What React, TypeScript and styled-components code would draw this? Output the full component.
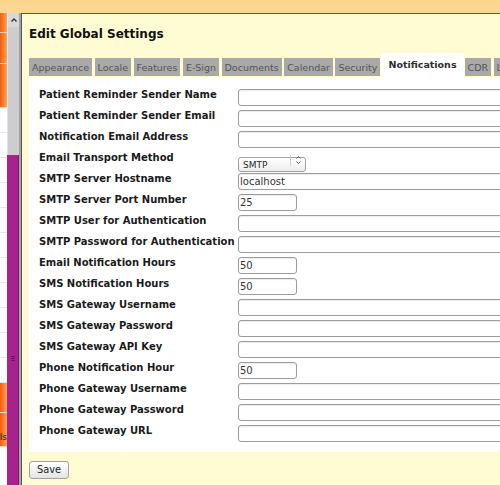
import React from "react";
import styled, { createGlobalStyle } from "styled-components";

const GlobalStyle = createGlobalStyle`
  html, body { margin: 0; padding: 0; }
  body {
    width: 500px;
    height: 485px;
    overflow: hidden;
    font-family: "DejaVu Sans", Verdana, sans-serif;
    background: #fffbd2;
  }
`;

const Page = styled.div`
  display: flex;
  flex-direction: column;
  width: 500px;
  height: 485px;
  overflow: hidden;
`;

const TopBar = styled.div`
  height: 13px;
  flex: none;
  background: linear-gradient(to bottom, #fcd58b, #fcd995);
`;

const Body = styled.div`
  flex: 1;
  display: flex;
  min-height: 0;
`;

const SideStrip = styled.div`
  width: 7px;
  flex: none;
  display: flex;
  flex-direction: column;
  overflow: hidden;
  background: #ffffff;
`;

const SideCell = styled.div<{ $h: number; $orange?: boolean }>`
  height: ${(p) => p.$h}px;
  flex: none;
  box-sizing: border-box;
  border-bottom: 1px solid ${(p) => (p.$orange ? "#fdd3b4" : "#e4e4ee")};
  background: ${(p) =>
    p.$orange ? "linear-gradient(to right, #f55d08, #fca35c)" : "#ffffff"};
  font-size: 9px;
  line-height: 10px;
  color: #222;
  display: flex;
  justify-content: flex-end;
  align-items: flex-end;
  padding-bottom: 4px;
  white-space: nowrap;
  overflow: hidden;
`;

const ScrollBar = styled.div`
  width: 12px;
  flex: none;
  display: flex;
  flex-direction: column;
  overflow: hidden;
  background: #cfcfcf;
`;

const ScrollButton = styled.div`
  height: 14px;
  flex: none;
  box-sizing: border-box;
  background: #d8d8d8;
  border-left: 1px solid #ececec;
  display: flex;
  align-items: center;
  justify-content: center;
`;

const ScrollTrack = styled.div`
  height: 128px;
  flex: none;
  background: #cdcdd0;
  border-left: 1px solid #e2e2e2;
`;

const ScrollThumb = styled.div`
  height: 406px;
  flex: none;
  box-sizing: border-box;
  background: #a6228d;
  border-right: 1px solid #7d1a6b;
  display: flex;
  flex-direction: column;
  align-items: center;
  justify-content: center;
  gap: 1px;
`;

const Grip = styled.div`
  width: 4px;
  height: 1px;
  background: #6c145b;
`;

const Gutter = styled.div`
  width: 2px;
  flex: none;
  background: #a2a2a2;
`;

const Main = styled.div`
  flex: 1;
  min-width: 0;
  border-top: 1px solid #555555;
  border-left: 1px solid #555555;
  background: #fffbd2;
  padding: 13px 0 0 7px;
  overflow: hidden;
`;

const Title = styled.h1`
  margin: 0;
  font-size: 12px;
  line-height: 15px;
  font-weight: bold;
  color: #111111;
  white-space: nowrap;
`;

const TabBar = styled.div`
  margin-top: 11px;
  height: 24px;
  display: flex;
  align-items: flex-end;
  gap: 2.5px;
  white-space: nowrap;
  overflow: hidden;
`;

const Tab = styled.div<{ $active?: boolean }>`
  flex: none;
  font-size: 9.5px;
  color: ${(p) => (p.$active ? "#2e2e2e" : "#555555")};
  font-weight: ${(p) => (p.$active ? "bold" : "normal")};
  background: ${(p) => (p.$active ? "#ffffff" : "#a9a9a9")};
  padding: ${(p) => (p.$active ? "3px 7px 3px" : "1px 3px 0")};
  line-height: ${(p) => (p.$active ? "18px" : "17px")};
  margin: ${(p) => (p.$active ? "0 -1.5px" : "0 0 1px")};
`;

const Panel = styled.div`
  background: #ffffff;
  padding: 10px 0 8px 10px;
  display: grid;
  grid-template-columns: 199px 1fr;
  grid-auto-rows: 21px;
  width: 600px;
`;

const Label = styled.div`
  font-size: 10px;
  line-height: 12px;
  padding-top: 1.5px;
  font-weight: bold;
  color: #1b1b1b;
  white-space: nowrap;
`;

const Field = styled.div`
  display: flex;
  align-items: flex-start;
  padding-top: 2px;
`;

const TextInput = styled.input<{ $small?: boolean }>`
  box-sizing: border-box;
  width: ${(p) => (p.$small ? "59px" : "300px")};
  height: 17px;
  margin: 0;
  padding: 0 1px;
  border: 1px solid #9c9c9c;
  border-radius: 3px;
  box-shadow: inset 0 1px 1px rgba(0, 0, 0, 0.08);
  background: #ffffff;
  font-family: "DejaVu Sans", Verdana, sans-serif;
  font-size: 10px;
  color: #333333;
  outline: none;
`;

const SelectWrap = styled.div`
  position: relative;
  width: 68px;
  height: 15px;
  margin-top: 0.5px;
`;

const Select = styled.select`
  appearance: none;
  -webkit-appearance: none;
  box-sizing: border-box;
  width: 68px;
  height: 15px;
  margin: 0;
  padding: 0 0 0 4px;
  border: 1px solid #a4a4a4;
  border-radius: 3px;
  background: linear-gradient(to bottom, #ffffff, #ececec);
  font-family: "DejaVu Sans", Verdana, sans-serif;
  font-size: 9px;
  color: #2a2a2a;
  outline: none;
`;

const SelectArrow = styled.div`
  position: absolute;
  top: 2px;
  right: 1px;
  bottom: 2px;
  width: 14px;
  border-left: 1px solid #cfcfcf;
  display: flex;
  align-items: center;
  justify-content: center;
  pointer-events: none;
`;

const Footer = styled.div`
  display: flex;
  padding-top: 9px;
`;

const SaveButton = styled.button`
  box-sizing: border-box;
  width: 40px;
  height: 18px;
  margin: 0;
  padding: 0;
  border: 1px solid #a0a0a0;
  border-radius: 3px;
  background: linear-gradient(to bottom, #ffffff, #e4e4e4);
  font-family: "DejaVu Sans", Verdana, sans-serif;
  font-size: 9.8px;
  line-height: 16px;
  color: #222222;
`;

type Row = { label: string; kind: "wide" | "small" | "select"; value?: string };

const rows: Row[] = [
  { label: "Patient Reminder Sender Name", kind: "wide" },
  { label: "Patient Reminder Sender Email", kind: "wide" },
  { label: "Notification Email Address", kind: "wide" },
  { label: "Email Transport Method", kind: "select", value: "SMTP" },
  { label: "SMTP Server Hostname", kind: "wide", value: "localhost" },
  { label: "SMTP Server Port Number", kind: "small", value: "25" },
  { label: "SMTP User for Authentication", kind: "wide" },
  { label: "SMTP Password for Authentication", kind: "wide" },
  { label: "Email Notification Hours", kind: "small", value: "50" },
  { label: "SMS Notification Hours", kind: "small", value: "50" },
  { label: "SMS Gateway Username", kind: "wide" },
  { label: "SMS Gateway Password", kind: "wide" },
  { label: "SMS Gateway API Key", kind: "wide" },
  { label: "Phone Notification Hour", kind: "small", value: "50" },
  { label: "Phone Gateway Username", kind: "wide" },
  { label: "Phone Gateway Password", kind: "wide" },
  { label: "Phone Gateway URL", kind: "wide" },
];

const tabs = [
  "Appearance",
  "Locale",
  "Features",
  "E-Sign",
  "Documents",
  "Calendar",
  "Security",
  "Notifications",
  "CDR",
  "Logging",
];

const sideCells: { h: number; orange?: boolean; text?: string }[] = [
  { h: 20, orange: true },
  { h: 31, orange: true },
  { h: 44, orange: true },
  { h: 25 },
  { h: 25 },
  { h: 25 },
  { h: 25 },
  { h: 25 },
  { h: 25 },
  { h: 25 },
  { h: 25 },
  { h: 25 },
  { h: 25 },
  { h: 25 },
  { h: 30, orange: true },
  { h: 34, orange: true, text: "ls" },
  { h: 40 },
];

export default function App() {
  return (
    <>
      <GlobalStyle />
      <Page>
        <TopBar />
        <Body>
          <SideStrip>
            {sideCells.map((c, i) => (
              <SideCell key={i} $h={c.h} $orange={c.orange}>
                {c.text}
              </SideCell>
            ))}
          </SideStrip>
          <ScrollBar>
            <ScrollButton>
              <svg width="8" height="6" viewBox="0 0 8 6">
                <polyline points="1.5,4.5 4,2 6.5,4.5" fill="none" stroke="#333" strokeWidth="1.3" />
              </svg>
            </ScrollButton>
            <ScrollTrack />
            <ScrollThumb>
              <Grip />
              <Grip />
              <Grip />
            </ScrollThumb>
          </ScrollBar>
          <Gutter />
          <Main>
            <Title>Edit Global Settings</Title>
            <TabBar>
              {tabs.map((t) => (
                <Tab key={t} $active={t === "Notifications"}>
                  {t}
                </Tab>
              ))}
            </TabBar>
            <Panel>
              {rows.map((r) => (
                <React.Fragment key={r.label}>
                  <Label>{r.label}</Label>
                  <Field>
                    {r.kind === "select" ? (
                      <SelectWrap>
                        <Select defaultValue="SMTP">
                          <option value="SMTP">SMTP</option>
                          <option value="SENDMAIL">SENDMAIL</option>
                          <option value="PHPMAIL">PHPMAIL</option>
                        </Select>
                        <SelectArrow>
                          <svg width="7" height="10" viewBox="0 0 7 10">
                            <polyline points="1.5,3.5 3.5,1.5 5.5,3.5" fill="none" stroke="#555" strokeWidth="1" />
                            <polyline points="1.5,6.5 3.5,8.5 5.5,6.5" fill="none" stroke="#555" strokeWidth="1" />
                          </svg>
                        </SelectArrow>
                      </SelectWrap>
                    ) : (
                      <TextInput
                        type="text"
                        $small={r.kind === "small"}
                        defaultValue={r.value ?? ""}
                      />
                    )}
                  </Field>
                </React.Fragment>
              ))}
            </Panel>
            <Footer>
              <SaveButton type="button">Save</SaveButton>
            </Footer>
          </Main>
        </Body>
      </Page>
    </>
  );
}
